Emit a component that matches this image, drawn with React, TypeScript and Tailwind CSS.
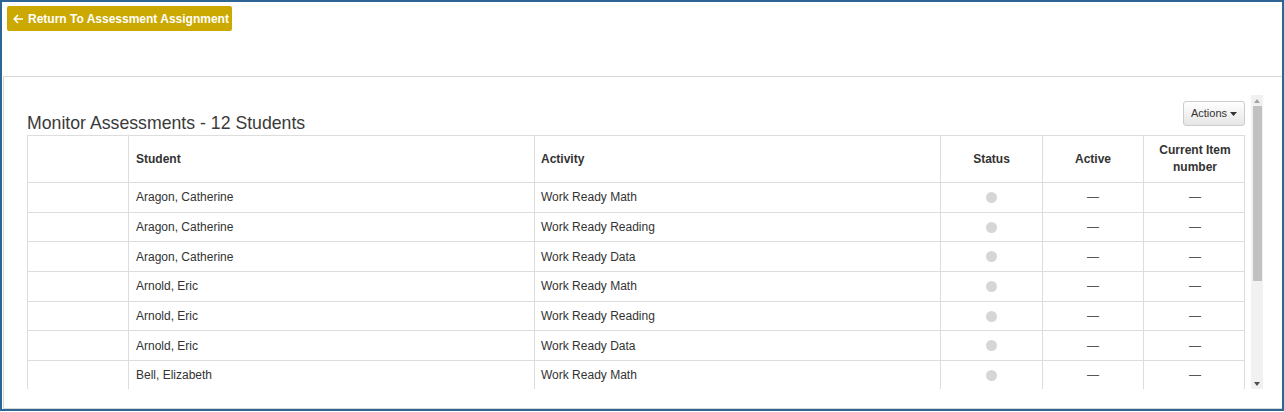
type Row = {
  student: string
  activity: string
}

const rows: Row[] = [
  { student: "Aragon, Catherine", activity: "Work Ready Math" },
  { student: "Aragon, Catherine", activity: "Work Ready Reading" },
  { student: "Aragon, Catherine", activity: "Work Ready Data" },
  { student: "Arnold, Eric", activity: "Work Ready Math" },
  { student: "Arnold, Eric", activity: "Work Ready Reading" },
  { student: "Arnold, Eric", activity: "Work Ready Data" },
  { student: "Bell, Elizabeth", activity: "Work Ready Math" },
]

const cols = "grid grid-cols-[101px_406px_406px_102px_101px_102px]"

function StudentRow({ student, activity }: Row) {
  return (
    <div className={`${cols} h-[29.7px] border-b border-[#dddddd] text-[12px] text-[#333]`}>
      <div className="border-r border-[#dddddd]" />
      <div className="flex items-center border-r border-[#dddddd] pl-[7px]">{student}</div>
      <div className="flex items-center border-r border-[#dddddd] pl-[6px]">{activity}</div>
      <div className="flex items-center justify-center border-r border-[#dddddd]">
        <span className="block h-[11px] w-[11px] rounded-full bg-[#d6d6d6]" />
      </div>
      <div className="flex items-center justify-center border-r border-[#dddddd] text-[#555]">—</div>
      <div className="flex items-center justify-center text-[#555]">—</div>
    </div>
  )
}

export default function App() {
  return (
    <div className="h-[411px] w-[1284px] border-2 border-[#2d6595] bg-white font-['Liberation_Sans',Arial,sans-serif]">
      <div className="h-[74px] pl-[5px] pt-[4px]">
        <button className="flex h-[25px] w-[225px] items-center gap-[4px] rounded-[2px] bg-[#cba900] pl-[6px] text-[12px] font-bold text-white">
          <svg width="11" height="10" viewBox="0 0 11 10" fill="none" stroke="white" strokeWidth="1.6">
            <path d="M10 5H1.5M5 1L1.2 5 5 9" />
          </svg>
          <span>Return To Assessment Assignment</span>
        </button>
      </div>
      <div className="ml-[1px] h-[333px] border border-r-0 border-[#d8d8d8] pt-[18px]">
        <div className="flex h-[294px]">
          <div className="flex-1 overflow-hidden pl-[23px]">
            <div className="flex h-[40px] w-[1218px] justify-between">
              <h2 className="mb-[2px] self-end text-[17.7px] leading-[20px] text-[#3a3a3a]">Monitor Assessments - 12 Students</h2>
              <button className="mt-[6px] flex h-[25px] w-[62px] items-center justify-center gap-[3px] self-start rounded-[3px] border border-[#cccccc] bg-gradient-to-b from-white to-[#e6e6e6] text-[11px] text-[#333]">
                Actions
                <svg width="7" height="4" viewBox="0 0 7 4">
                  <path d="M0 0h7L3.5 4z" fill="#333" />
                </svg>
              </button>
            </div>
            <div className="w-[1218px] border border-b-0 border-[#dddddd]">
              <div className={`${cols} h-[47px] border-b border-[#dddddd] text-[12px] font-bold text-[#333]`}>
                <div className="border-r border-[#dddddd]" />
                <div className="flex items-center border-r border-[#dddddd] pl-[7px]">Student</div>
                <div className="flex items-center border-r border-[#dddddd] pl-[6px]">Activity</div>
                <div className="flex items-center justify-center border-r border-[#dddddd]">Status</div>
                <div className="flex items-center justify-center border-r border-[#dddddd]">Active</div>
                <div className="flex items-center justify-center text-center leading-[17px]">
                  Current Item
                  <br />
                  number
                </div>
              </div>
              {rows.map((r, i) => (
                <StudentRow key={i} {...r} />
              ))}
              <div className={`${cols} h-[4px]`}>
                <div className="border-r border-[#dddddd]" />
                <div className="border-r border-[#dddddd]" />
                <div className="border-r border-[#dddddd]" />
                <div className="border-r border-[#dddddd]" />
                <div className="border-r border-[#dddddd]" />
                <div />
              </div>
            </div>
          </div>
          <div className="mr-[19px] flex w-[12px] flex-col items-center bg-[#f1f1f1]">
            <div className="flex h-[11px] items-center justify-center">
              <svg width="6" height="4" viewBox="0 0 6 4">
                <path d="M0 4h6L3 0z" fill="#a3a3a3" />
              </svg>
            </div>
            <div className="h-[175px] w-[9px] bg-[#c1c1c1]" />
            <div className="flex-1" />
            <div className="flex h-[11px] items-center justify-center">
              <svg width="6" height="4" viewBox="0 0 6 4">
                <path d="M0 0h6L3 4z" fill="#505050" />
              </svg>
            </div>
          </div>
        </div>
      </div>
    </div>
  )
}
